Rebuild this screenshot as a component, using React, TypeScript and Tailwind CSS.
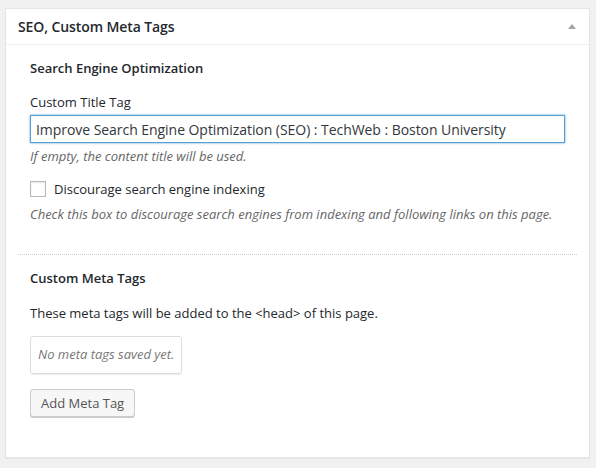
import React from "react";

export default function App() {
  return (
    <div
      className="w-[596px] h-[468px] bg-[#f1f1f1] pt-[8px] pl-[5px] pr-[6px]"
      style={{ fontFamily: '"Open Sans", sans-serif' }}
    >
      <div className="w-[585px] h-[450px] bg-white border border-[#e5e5e5] shadow-[0_1px_1px_rgba(0,0,0,0.04)] flex flex-col">
        <div className="h-[36px] border-b border-[#eeeeee] flex items-center justify-between pl-[12px] pr-[13px]">
          <h2 className="text-[14px] font-semibold text-[#23282d] leading-[20px] tracking-[-0.1px]">SEO, Custom Meta Tags</h2>
          <svg width="8" height="5" viewBox="0 0 8 5" className="block">
            <polygon points="4,0 8,5 0,5" fill="#a0a5aa" />
          </svg>
        </div>
        <div className="px-[12px] flex flex-col">
          <div className="px-[12px] pt-[14px] flex flex-col">
            <h4 className="text-[13px] font-semibold text-[#23282d] leading-[18px]">Search Engine Optimization</h4>
            <label className="mt-[15px] text-[13px] leading-[20px] text-[#23282d]">Custom Title Tag</label>
            <input
              readOnly
              value="Improve Search Engine Optimization (SEO) : TechWeb : Boston University"
              className="mt-[3px] h-[28px] w-full border border-[#5b9dd9] shadow-[0_0_2px_rgba(30,140,190,0.8)] px-[5px] text-[14px] tracking-[-0.05px] text-[#32373c] outline-none bg-white"
              style={{ fontFamily: '"Open Sans", sans-serif' }}
            />
            <p className="mt-[4px] text-[13px] leading-[18px] italic text-[#666]">If empty, the content title will be used.</p>
            <div className="mt-[14px] flex items-center h-[20px]">
              <span className="w-[16px] h-[16px] border border-[#b4b9be] bg-white shadow-[inset_0_1px_2px_rgba(0,0,0,0.1)] mr-[8px]" />
              <span className="text-[13px] leading-[20px] text-[#23282d]">Discourage search engine indexing</span>
            </div>
            <p className="mt-[6px] text-[13px] leading-[18px] italic text-[#666]">
              Check this box to discourage search engines from indexing and following links on this page.
            </p>
          </div>
          <div className="mt-[31px] border-t border-dotted border-[#cccccc]" />
          <div className="px-[12px] pt-[14px] flex flex-col items-start">
            <h4 className="text-[13px] font-semibold text-[#23282d] leading-[18px]">Custom Meta Tags</h4>
            <p className="mt-[16px] text-[13px] leading-[20px] text-[#23282d]">
              These meta tags will be added to the &lt;head&gt; of this page.
            </p>
            <div className="mt-[13px] h-[38px] border border-[#dddddd] rounded-[3px] shadow-[0_1px_1px_rgba(0,0,0,0.08)] px-[7px] flex items-center">
              <span className="text-[13px] italic text-[#777]">No meta tags saved yet.</span>
            </div>
            <button className="mt-[15px] h-[28px] px-[10px] bg-[#f7f7f7] border border-[#cccccc] rounded-[3px] shadow-[0_1px_0_#cccccc] text-[13px] text-[#555] leading-[26px]">
              Add Meta Tag
            </button>
          </div>
        </div>
      </div>
    </div>
  );
}
